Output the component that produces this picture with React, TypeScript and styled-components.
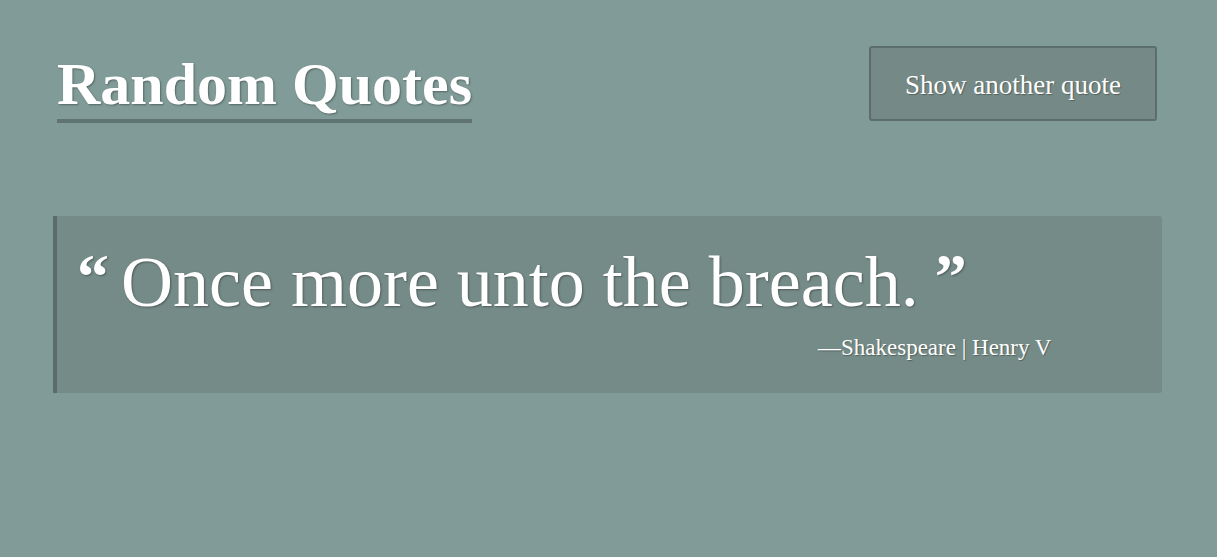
import React from "react";
import styled, { createGlobalStyle } from "styled-components";

const Global = createGlobalStyle`
  html, body { margin: 0; padding: 0; background: #819c98; }
  body { font-family: "Liberation Serif", "DejaVu Serif", serif; color: #fff; }
`;

const Container = styled.div`
  margin: 0 55px 0 53px;
`;

const Header = styled.header`
  display: flex;
  justify-content: space-between;
  align-items: flex-start;
  padding: 0 5px 0 4px;
`;

const Title = styled.h1`
  margin: 49px 0 0;
  font-size: 60px;
  line-height: 70px;
  font-weight: 700;
  border-bottom: 4px solid #5f7370;
  text-shadow: 1px 1px 2px rgba(0, 0, 0, 0.35);
`;

const Button = styled.button`
  margin-top: 46px;
  width: 288px;
  height: 75px;
  padding: 4px 0 0;
  background: #758a86;
  border: 2px solid #5b6e6b;
  border-radius: 3px;
  color: #fff;
  font-family: inherit;
  font-size: 27px;
  text-shadow: 1px 1px 1px rgba(0, 0, 0, 0.3);
  cursor: pointer;
`;

const Quote = styled.blockquote`
  margin: 93px 0 0;
  height: 177px;
  box-sizing: border-box;
  background: #758b87;
  border-left: 4px solid #5a6d6a;
  border-radius: 0 3px 3px 0;
  padding: 24px 20px 0 20px;
`;

const QuoteText = styled.p`
  margin: 0;
  font-size: 72px;
  line-height: 84px;
  text-shadow: 1px 1px 2px rgba(0, 0, 0, 0.35);
  display: flex;
  align-items: flex-start;
`;

const Mark = styled.span`
  font-size: 64px;
  font-weight: 700;
  line-height: 64px;
  padding-top: 5px;
  margin: 0 12px 0 0;
`;

const CloseMark = styled(Mark)`
  margin: 0 0 0 16px;
`;

const Cite = styled.p`
  margin: 9px 0 0;
  padding-left: 741px;
  font-size: 23px;
  line-height: 30px;
  text-shadow: 1px 1px 1px rgba(0, 0, 0, 0.3);
`;

export default function App() {
  return (
    <>
      <Global />
      <Container>
        <Header>
          <Title>Random Quotes</Title>
          <Button>Show another quote</Button>
        </Header>
        <Quote>
          <QuoteText>
            <Mark>“</Mark>
            Once more unto the breach.
            <CloseMark>”</CloseMark>
          </QuoteText>
          <Cite>—Shakespeare | Henry V</Cite>
        </Quote>
      </Container>
    </>
  );
}
